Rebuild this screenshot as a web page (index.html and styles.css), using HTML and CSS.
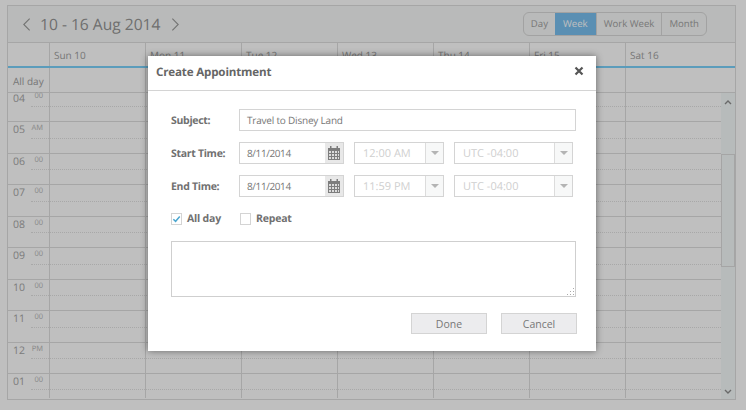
FILE: index.html
```html
<!DOCTYPE html>
<html lang="en">
<head>
    <meta charset="UTF-8">
    <title>Create Appointment</title>
    <link rel="stylesheet" href="styles.css">
</head>
<body>
<div class="scheduler">
    <div class="toolbar">
        <div class="date-nav">
            <svg class="nav-arrow" viewBox="0 0 10 16"><path d="M8.5 1.5 2 8l6.5 6.5"/></svg>
            <span class="date-range">10 - 16 Aug 2014</span>
            <svg class="nav-arrow" viewBox="0 0 10 16"><path d="M1.5 1.5 8 8l-6.5 6.5"/></svg>
        </div>
        <div class="views">
            <span class="view view-day">Day</span>
            <span class="view view-active">Week</span>
            <span class="view view-workweek">Work Week</span>
            <span class="view view-month">Month</span>
        </div>
    </div>
    <div class="day-head">
        <div class="corner"></div>
        <div class="day-name">Sun 10</div>
        <div class="day-name">Mon 11</div>
        <div class="day-name">Tue 12</div>
        <div class="day-name">Wed 13</div>
        <div class="day-name">Thu 14</div>
        <div class="day-name">Fri 15</div>
        <div class="day-name day-last">Sat 16</div>
    </div>
    <div class="allday-row">
        <div class="allday-label">All day</div>
        <div class="cell"></div><div class="cell"></div><div class="cell"></div><div class="cell"></div><div class="cell"></div><div class="cell"></div><div class="cell"></div>
    </div>
    <div class="grid-wrap">
        <div class="hours">
            <div class="hour hour-first"><div class="time"><b>04</b><i>00</i></div><div class="cell"></div><div class="cell"></div><div class="cell"></div><div class="cell"></div><div class="cell"></div><div class="cell"></div><div class="cell"></div></div>
            <div class="hour"><div class="time"><b>05</b><i>AM</i></div><div class="cell"></div><div class="cell"></div><div class="cell"></div><div class="cell"></div><div class="cell"></div><div class="cell"></div><div class="cell"></div></div>
            <div class="hour"><div class="time"><b>06</b><i>00</i></div><div class="cell"></div><div class="cell"></div><div class="cell"></div><div class="cell"></div><div class="cell"></div><div class="cell"></div><div class="cell"></div></div>
            <div class="hour"><div class="time"><b>07</b><i>00</i></div><div class="cell"></div><div class="cell"></div><div class="cell"></div><div class="cell"></div><div class="cell"></div><div class="cell"></div><div class="cell"></div></div>
            <div class="hour"><div class="time"><b>08</b><i>00</i></div><div class="cell"></div><div class="cell"></div><div class="cell"></div><div class="cell"></div><div class="cell"></div><div class="cell"></div><div class="cell"></div></div>
            <div class="hour"><div class="time"><b>09</b><i>00</i></div><div class="cell"></div><div class="cell"></div><div class="cell"></div><div class="cell"></div><div class="cell"></div><div class="cell"></div><div class="cell"></div></div>
            <div class="hour"><div class="time"><b>10</b><i>00</i></div><div class="cell"></div><div class="cell"></div><div class="cell"></div><div class="cell"></div><div class="cell"></div><div class="cell"></div><div class="cell"></div></div>
            <div class="hour"><div class="time"><b>11</b><i>00</i></div><div class="cell"></div><div class="cell"></div><div class="cell"></div><div class="cell"></div><div class="cell"></div><div class="cell"></div><div class="cell"></div></div>
            <div class="hour"><div class="time"><b>12</b><i>PM</i></div><div class="cell"></div><div class="cell"></div><div class="cell"></div><div class="cell"></div><div class="cell"></div><div class="cell"></div><div class="cell"></div></div>
            <div class="hour hour-last"><div class="time"><b>01</b><i>00</i></div><div class="cell"></div><div class="cell"></div><div class="cell"></div><div class="cell"></div><div class="cell"></div><div class="cell"></div><div class="cell"></div></div>
        </div>
        <div class="scrollbar">
            <svg class="scroll-arrow" viewBox="0 0 8 6"><path d="M1 5l3-3 3 3"/></svg>
            <div class="scroll-track"><div class="scroll-thumb"></div></div>
            <svg class="scroll-arrow" viewBox="0 0 8 6"><path d="M1 1l3 3 3-3"/></svg>
        </div>
    </div>
</div>

<div class="overlay"></div>

<div class="dialog">
    <div class="dialog-title">
        <span>Create Appointment</span>
        <svg class="close" viewBox="0 0 10 10"><path d="M1.5 1.5l7 7M8.5 1.5l-7 7"/></svg>
    </div>
    <div class="dialog-body">
        <div class="form-row">
            <label class="form-label">Subject:</label>
            <div class="field field-subject">Travel to Disney Land</div>
        </div>
        <div class="form-row">
            <label class="form-label">Start Time:</label>
            <div class="field field-date"><span class="field-text">8/11/2014</span>
                <span class="cal-btn">
                    <svg viewBox="0 0 12 14"><path class="cal-body" d="M0 2h2V0h1.5v2h5V0H10v2h2v12H0z"/><path class="cal-cells" d="M1 5h2v2H1zM4 5h2v2H4zM7 5h2v2H7zM10 5h1v2h-1zM1 8h2v2H1zM4 8h2v2H4zM7 8h2v2H7zM10 8h1v2h-1zM1 11h2v2H1zM4 11h2v2H4zM7 11h2v2H7zM10 11h1v2h-1z"/></svg>
                </span>
            </div>
            <div class="field field-time off"><span class="field-text">12:00 AM</span><span class="drop-btn"><i class="caret"></i></span></div>
            <div class="field field-zone off"><span class="field-text">UTC -04:00</span><span class="drop-btn"><i class="caret"></i></span></div>
        </div>
        <div class="form-row">
            <label class="form-label">End Time:</label>
            <div class="field field-date"><span class="field-text">8/11/2014</span>
                <span class="cal-btn">
                    <svg viewBox="0 0 12 14"><path class="cal-body" d="M0 2h2V0h1.5v2h5V0H10v2h2v12H0z"/><path class="cal-cells" d="M1 5h2v2H1zM4 5h2v2H4zM7 5h2v2H7zM10 5h1v2h-1zM1 8h2v2H1zM4 8h2v2H4zM7 8h2v2H7zM10 8h1v2h-1zM1 11h2v2H1zM4 11h2v2H4zM7 11h2v2H7zM10 11h1v2h-1z"/></svg>
                </span>
            </div>
            <div class="field field-time off"><span class="field-text">11:59 PM</span><span class="drop-btn"><i class="caret"></i></span></div>
            <div class="field field-zone off"><span class="field-text">UTC -04:00</span><span class="drop-btn"><i class="caret"></i></span></div>
        </div>
        <div class="check-row">
            <span class="check-item check-allday">
                <span class="check-box"><svg viewBox="0 0 10 10"><path d="M1.5 5.2 4 7.6l4.6-5.4"/></svg></span>All day
            </span>
            <span class="check-item">
                <span class="check-box"></span>Repeat
            </span>
        </div>
        <div class="notes">
            <svg class="grip" viewBox="0 0 9 9"><path d="M7 1h1v1H7zM4 4h1v1H4zM7 4h1v1H7zM1 7h1v1H1zM4 7h1v1H4zM7 7h1v1H7z"/></svg>
        </div>
        <div class="actions">
            <button class="btn">Done</button>
            <button class="btn">Cancel</button>
        </div>
    </div>
</div>
</body>
</html>
```

FILE: styles.css
```css
* {
    padding: 0;
    margin: 0;
    box-sizing: border-box;
}

body {
    width: 746px;
    height: 410px;
    overflow: hidden;
    padding: 5px 10px 10px 7px;
    background-color: #fff;
    font-family: "Open Sans", "Noto Sans", sans-serif;
    font-size: 10px;
    color: #777;
    position: relative;
    text-rendering: geometricPrecision;
}

/* scheduler behind the dialog */
.scheduler {
    width: 729px;
    height: 395px;
    border: 1px solid #dedede;
    display: flex;
    flex-direction: column;
    background-color: #fff;
}

.toolbar {
    height: 37px;
    flex: none;
    display: flex;
    align-items: center;
    justify-content: space-between;
    padding: 0 28px 0 14px;
    background-color: #f7f9f8;
    border-bottom: 1px solid #dedede;
}

.date-nav {
    display: flex;
    align-items: center;
    gap: 9px;
    color: #949494;
}

.date-range {
    font-size: 15.6px;
    line-height: 24px;
    margin-right: 2px;
}

.nav-arrow {
    width: 9px;
    height: 15px;
    fill: none;
    stroke: #9a9a9a;
    stroke-width: 1.2;
}

.views {
    display: flex;
    height: 24px;
    border: 1px solid #d8d8d8;
    border-radius: 6px;
    overflow: hidden;
    font-size: 9.6px;
    line-height: 22px;
    color: #a0a0a0;
}

.view {
    padding: 0 7px;
    border-left: 1px solid #d8d8d8;
}

.view-day {
    border-left: none;
}

.view-active {
    padding: 0 8px;
    background-color: #78bfef;
    color: #fff;
    border-left: none;
}

.day-head {
    height: 25px;
    flex: none;
    display: flex;
    border-bottom: 2px solid #7ad0fa;
    background-color: #fff;
    color: #a0a0a0;
    line-height: 25px;
}

.corner {
    width: 42px;
    flex: none;
    border-right: 1px solid #dedede;
}

.day-name {
    width: 96px;
    flex: none;
    padding-left: 4px;
    border-right: 1px solid #dedede;
}

.day-last {
    border-right: none;
}

.allday-row {
    height: 25px;
    flex: none;
    display: flex;
    border-bottom: 1px solid #dedede;
}

.allday-label {
    width: 42px;
    flex: none;
    padding: 1px 0 0 5px;
    border-right: 1px solid #dedede;
    color: #a0a0a0;
    line-height: 25px;
    white-space: nowrap;
}

.cell {
    width: 96px;
    flex: none;
    border-right: 1px solid #dedede;
}

.cell:last-child {
    border-right: none;
}

.grid-wrap {
    flex: 1;
    min-height: 0;
    display: flex;
}

.hours {
    width: 713px;
    flex: none;
}

.hour {
    height: 31.5px;
    display: flex;
    position: relative;
    border-bottom: 1px solid #dedede;
}

.hour-first {
    height: 29px;
}

.hour-last {
    height: 24px;
    border-bottom: none;
}

.hour::after {
    content: "";
    position: absolute;
    left: 23px;
    right: 0;
    bottom: 14px;
    border-top: 1px dotted #e0e0e0;
}

.hour-last::after {
    bottom: 8px;
}

.time {
    width: 42px;
    flex: none;
    display: flex;
    justify-content: space-between;
    padding: 0 6px 0 5px;
    border-right: 1px solid #dedede;
    color: #a6a6a6;
}

.time b {
    font-weight: 400;
    font-size: 10.5px;
    line-height: 17px;
}

.time i {
    font-style: normal;
    font-size: 7.5px;
    line-height: 12px;
    color: #b4b4b4;
}

.hour-first .time b {
    line-height: 13px;
}

.hour-first .time i {
    line-height: 7px;
}

.scrollbar {
    width: 14px;
    flex: none;
    display: flex;
    flex-direction: column;
    align-items: center;
    background-color: #f5fafa;
    padding: 6px 0 4px;
}

.scroll-arrow {
    width: 8px;
    height: 6px;
    flex: none;
    fill: none;
    stroke: #8d8d8d;
    stroke-width: 1.4;
}

.scroll-track {
    flex: 1;
    width: 100%;
    padding-top: 49px;
}

.scroll-thumb {
    height: 113px;
    background-color: #f5fafa;
    border: 1px solid #dcdcdc;
}

.overlay {
    position: absolute;
    left: 0;
    top: 0;
    width: 100%;
    height: 100%;
    background-color: rgba(0, 0, 0, 0.25);
}

/* dialog */
.dialog {
    position: absolute;
    left: 148px;
    top: 56px;
    width: 448px;
    height: 295px;
    background-color: #fff;
    box-shadow: 0 0 7px rgba(0, 0, 0, 0.45);
}

.dialog-title {
    height: 35px;
    display: flex;
    align-items: center;
    justify-content: space-between;
    padding: 0 12px 2px 8px;
    border-bottom: 1px solid #d4d4d4;
    font-size: 11.6px;
    font-weight: 700;
    letter-spacing: -0.17px;
    color: #666;
}

.close {
    width: 10px;
    height: 10px;
    margin-top: -2px;
    fill: none;
    stroke: #555;
    stroke-width: 2.2;
}

.dialog-body {
    padding: 18px 20px 0 23px;
}

.form-row {
    display: flex;
    align-items: center;
    height: 22px;
    margin-bottom: 11px;
}

.form-label {
    width: 68px;
    flex: none;
    padding-top: 2px;
    font-size: 10.5px;
    font-weight: 700;
    letter-spacing: -0.3px;
    color: #707070;
}

.field {
    height: 22px;
    display: flex;
    align-items: center;
    justify-content: space-between;
    border: 1px solid #d4d4d4;
    flex: none;
}

.field-subject {
    width: 337px;
    padding-left: 7px;
    letter-spacing: -0.2px;
}

.field-date {
    width: 105px;
    margin-right: 10px;
    letter-spacing: -0.4px;
}

.field-date .field-text {
    padding-left: 7px;
}

.field-time {
    width: 90px;
    margin-right: 10px;
}

.field-zone {
    width: 119px;
}

.off {
    color: #cfcfcf;
    font-size: 11px;
}

.off .field-text {
    padding-left: 8px;
}

.cal-btn {
    width: 18px;
    height: 20px;
    display: flex;
    align-items: center;
    justify-content: center;
    background-color: #e8e8e8;
}

.cal-btn svg {
    width: 12px;
    height: 14px;
}

.cal-body {
    fill: #7d7d7d;
}

.cal-cells {
    fill: #dcdcdc;
}

.drop-btn {
    width: 18px;
    height: 20px;
    display: flex;
    align-items: center;
    justify-content: center;
    background-color: #f7f8f8;
    border-left: 1px solid #dcdcdc;
}

.caret {
    width: 0;
    height: 0;
    border-left: 4px solid transparent;
    border-right: 4px solid transparent;
    border-top: 4px solid #b4b4b4;
}

.check-row {
    display: flex;
    height: 16px;
    margin-top: 14px;
    font-size: 10.5px;
    font-weight: 700;
    letter-spacing: -0.2px;
    color: #707070;
    line-height: 16px;
}

.check-item {
    display: flex;
    align-items: center;
    gap: 5px;
}

.check-allday {
    width: 69px;
}

.check-box {
    width: 11px;
    height: 12px;
    flex: none;
    border: 1px solid #d4d4d4;
    background-color: #fff;
    display: block;
}

.check-box svg {
    display: block;
    width: 9px;
    height: 10px;
    fill: none;
    stroke: #4ba6cf;
    stroke-width: 1.6;
}

.notes {
    height: 56px;
    width: 405px;
    margin-top: 14px;
    border: 1px solid #cfcfcf;
    position: relative;
}

.grip {
    position: absolute;
    right: 0;
    bottom: 0;
    width: 9px;
    height: 9px;
    fill: #aaa;
}

.actions {
    display: flex;
    justify-content: flex-end;
    gap: 14px;
    width: 406px;
    margin-top: 16px;
}

.btn {
    width: 76px;
    height: 21px;
    border: 1px solid #d4d4d4;
    background-color: #ececee;
    font-family: inherit;
    font-size: 10.5px;
    color: #777;
}
```
